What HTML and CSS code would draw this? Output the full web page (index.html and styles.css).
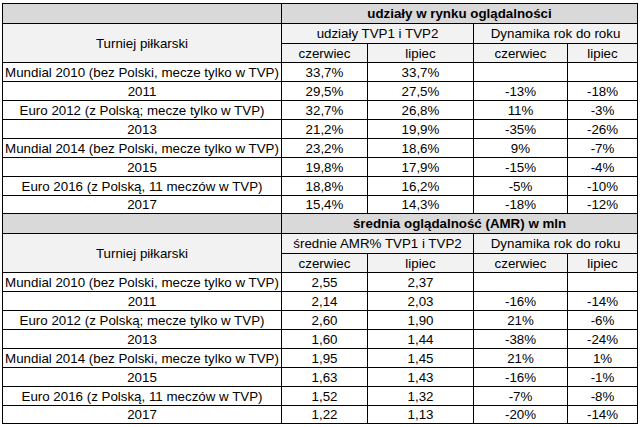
FILE: index.html
```html
<!DOCTYPE html>
<html lang="pl">
<head>
<meta charset="utf-8">
<title>Oglądalność turniejów piłkarskich</title>
<link rel="stylesheet" href="styles.css">
</head>
<body>
<table class="sheet">
  <colgroup>
    <col class="c-name">
    <col class="c-a">
    <col class="c-b">
    <col class="c-c">
    <col class="c-d">
  </colgroup>
  <tbody>
    <tr class="h1">
      <td></td>
      <td colspan="4" class="title">udziały w rynku oglądalności</td>
    </tr>
    <tr class="h2">
      <td rowspan="2" class="light">Turniej piłkarski</td>
      <td colspan="2" class="light">udziały TVP1 i TVP2</td>
      <td colspan="2" class="light">Dynamika rok do roku</td>
    </tr>
    <tr class="h3">
      <td class="light">czerwiec</td>
      <td class="light">lipiec</td>
      <td class="light">czerwiec</td>
      <td class="light">lipiec</td>
    </tr>
    <tr><td>Mundial 2010 (bez Polski, mecze tylko w TVP)</td><td>33,7%</td><td>33,7%</td><td></td><td></td></tr>
    <tr><td>2011</td><td>29,5%</td><td>27,5%</td><td>-13%</td><td>-18%</td></tr>
    <tr><td>Euro 2012 (z Polską; mecze tylko w TVP)</td><td>32,7%</td><td>26,8%</td><td>11%</td><td>-3%</td></tr>
    <tr><td>2013</td><td>21,2%</td><td>19,9%</td><td>-35%</td><td>-26%</td></tr>
    <tr><td>Mundial 2014 (bez Polski, mecze tylko w TVP)</td><td>23,2%</td><td>18,6%</td><td>9%</td><td>-7%</td></tr>
    <tr><td>2015</td><td>19,8%</td><td>17,9%</td><td>-15%</td><td>-4%</td></tr>
    <tr><td>Euro 2016 (z Polską, 11 meczów w TVP)</td><td>18,8%</td><td>16,2%</td><td>-5%</td><td>-10%</td></tr>
    <tr class="last"><td>2017</td><td>15,4%</td><td>14,3%</td><td>-18%</td><td>-12%</td></tr>

    <tr class="h1">
      <td></td>
      <td colspan="4" class="title">średnia oglądalność (AMR) w mln</td>
    </tr>
    <tr class="h2">
      <td rowspan="2" class="light">Turniej piłkarski</td>
      <td colspan="2" class="light">średnie AMR% TVP1 i TVP2</td>
      <td colspan="2" class="light">Dynamika rok do roku</td>
    </tr>
    <tr class="h3">
      <td class="light">czerwiec</td>
      <td class="light">lipiec</td>
      <td class="light">czerwiec</td>
      <td class="light">lipiec</td>
    </tr>
    <tr><td>Mundial 2010 (bez Polski, mecze tylko w TVP)</td><td>2,55</td><td>2,37</td><td></td><td></td></tr>
    <tr><td>2011</td><td>2,14</td><td>2,03</td><td>-16%</td><td>-14%</td></tr>
    <tr><td>Euro 2012 (z Polską; mecze tylko w TVP)</td><td>2,60</td><td>1,90</td><td>21%</td><td>-6%</td></tr>
    <tr><td>2013</td><td>1,60</td><td>1,44</td><td>-38%</td><td>-24%</td></tr>
    <tr><td>Mundial 2014 (bez Polski, mecze tylko w TVP)</td><td>1,95</td><td>1,45</td><td>21%</td><td>1%</td></tr>
    <tr><td>2015</td><td>1,63</td><td>1,43</td><td>-16%</td><td>-1%</td></tr>
    <tr><td>Euro 2016 (z Polską, 11 meczów w TVP)</td><td>1,52</td><td>1,32</td><td>-7%</td><td>-8%</td></tr>
    <tr class="last"><td>2017</td><td>1,22</td><td>1,13</td><td>-20%</td><td>-14%</td></tr>
  </tbody>
</table>
</body>
</html>
```

FILE: styles.css
```css
html, body {
  margin: 0;
  background: #ffffff;
}

body {
  padding: 3px 0 0 2px;
  font-family: "Liberation Sans", Arial, sans-serif;
  font-size: 13.33px;
  color: #000000;
}

.sheet {
  border-collapse: collapse;
  table-layout: fixed;
  width: 636px;
}

.c-name { width: 279px; }
.c-a { width: 86px; }
.c-b { width: 106px; }
.c-c { width: 94px; }
.c-d { width: 70px; }

.sheet td {
  border: 1px solid #000000;
  padding: 0 2px;
  text-align: center;
  vertical-align: middle;
  white-space: nowrap;
  line-height: 15px;
  background: #ffffff;
}

.sheet tr { height: 19px; }
.sheet tr.h1 { height: 20px; }
.sheet tr.h2 { height: 20px; }
.sheet tr.h3 { height: 19px; }
.sheet tr.last { height: 18px; }

.sheet tr.h1 td {
  background: #d9d9d9;
}

.sheet td.title {
  font-weight: bold;
}

.sheet td.light {
  background: #f2f2f2;
}
```
